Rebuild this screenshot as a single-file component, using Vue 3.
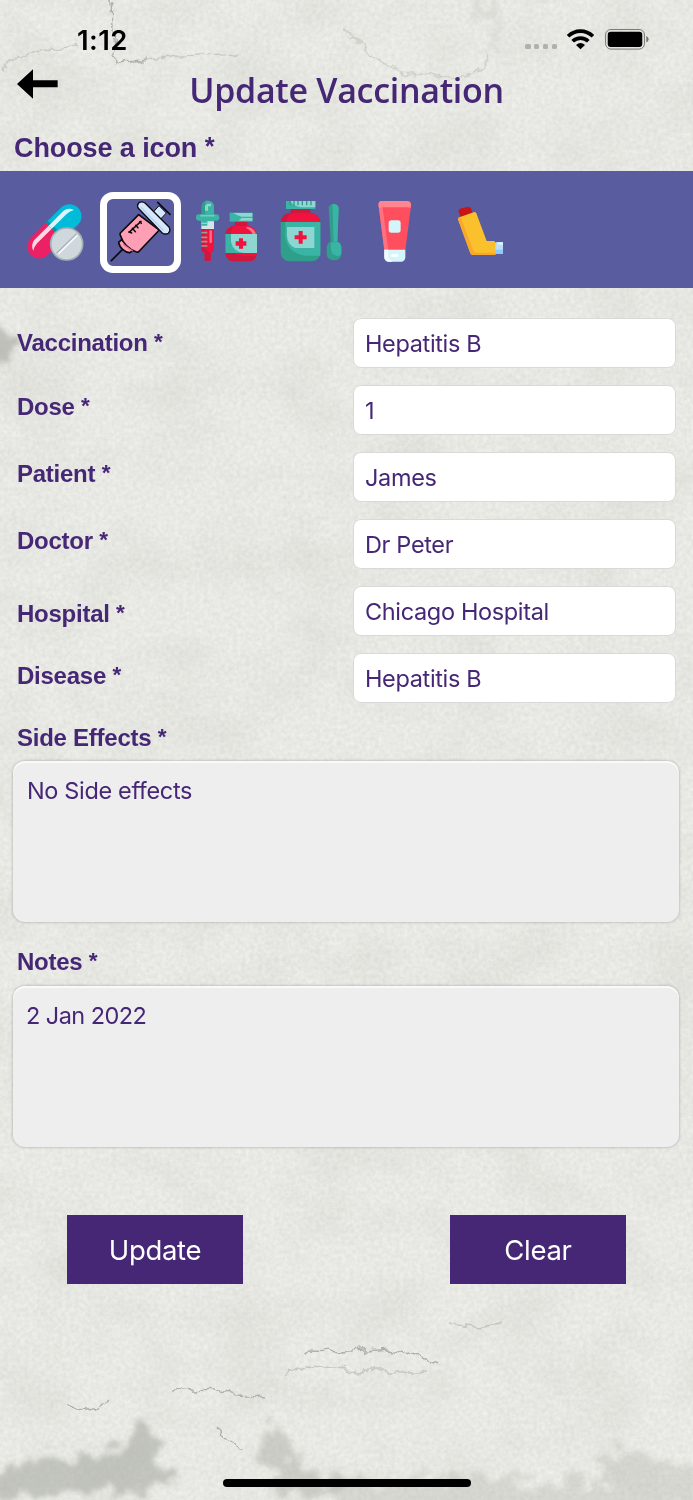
<template>
  <div class="screen">
    <svg
      class="paper"
      viewBox="0 0 693 1500"
      preserveAspectRatio="none"
      color-interpolation-filters="sRGB"
      aria-hidden="true"
    >
      <defs>
        <filter id="grain" x="0" y="0" width="100%" height="100%">
          <feTurbulence type="fractalNoise" baseFrequency="0.24" numOctaves="4" seed="8" />
          <feColorMatrix
            values="0.08 0 0 0 0.872  0.08 0 0 0 0.875  0.08 0 0 0 0.855  0 0 0 0 1"
          />
        </filter>
        <filter id="clouds" x="0" y="0" width="100%" height="100%">
          <feTurbulence type="fractalNoise" baseFrequency="0.014 0.017" numOctaves="5" seed="3" />
          <feColorMatrix values="0 0 0 0 0.62  0 0 0 0 0.63  0 0 0 0 0.59  0.7 0 0 0 -0.28" />
        </filter>
        <filter id="rough" x="-20%" y="-20%" width="140%" height="140%">
          <feTurbulence type="fractalNoise" baseFrequency="0.06" numOctaves="5" seed="5" />
          <feDisplacementMap
            in="SourceGraphic"
            scale="44"
            xChannelSelector="R"
            yChannelSelector="G"
          />
          <feGaussianBlur stdDeviation="2.5" />
        </filter>
        <filter id="crack" x="-20%" y="-20%" width="140%" height="140%">
          <feTurbulence type="fractalNoise" baseFrequency="0.06" numOctaves="4" seed="2" />
          <feDisplacementMap
            in="SourceGraphic"
            scale="14"
            xChannelSelector="R"
            yChannelSelector="G"
          />
          <feGaussianBlur stdDeviation="0.6" />
        </filter>
      </defs>
      <rect width="693" height="1500" filter="url(#grain)" />
      <rect width="693" height="1500" filter="url(#clouds)" opacity="0.35" />
      <!-- stains -->
      <g filter="url(#rough)" fill="#a3a59c">
        <path
          d="M-10 1482 L25 1462 L60 1455 L95 1460 L122 1450 L140 1428 L152 1430 L156 1462 L180 1488 L110 1492 L50 1490 L-10 1500Z"
          opacity="0.55"
        />
        <path d="M262 1435 L274 1418 L284 1435 L306 1472 L350 1478 L340 1492 L272 1496Z" opacity="0.42" />
        <path
          d="M340 1478 L420 1482 L500 1474 L525 1488 L560 1480 L605 1484 L610 1450 L660 1460 L710 1472 L710 1510 L340 1510Z"
          opacity="0.28"
        />
        <ellipse cx="-1" cy="342" rx="11" ry="20" opacity="0.6" />
        <path d="M493 0 L503 30 L500 58 L486 50 L492 28 L470 8Z" opacity="0.18" />
      </g>
      <!-- cracks -->
      <g filter="url(#crack)" fill="none" stroke="#9c9e96" stroke-width="1.4" opacity="0.75">
        <path d="M111 0 L112 30 L115 64 L148 58" />
        <path d="M115 63 L180 57 L240 54" opacity="0.5" />
        <path d="M0 68 L35 54 L78 43" opacity="0.5" />
        <path d="M346 28 Q380 76 438 76 T490 52" opacity="0.4" />
        <path d="M175 1391 L205 1388 L235 1394 L265 1397" />
        <path d="M70 1408 L90 1409 L107 1397" />
        <path d="M305 1351 L350 1352 L390 1349 L440 1364" />
        <path d="M450 1324 L480 1328 L500 1322" opacity="0.6" />
        <path d="M285 1373 L310 1366 L360 1370 L425 1370" opacity="0.6" />
        <path d="M215 1428 L242 1450" />
      </g>
    </svg>

    <div class="content">
      <div class="status-bar">
        <span class="clock">1:12</span>
        <div class="status-icons">
          <span class="cell"><i v-for="n in 4" :key="n"></i></span>
          <svg class="wifi" viewBox="0 0 81 62">
            <path
              d="M3 22 C24 1 57 1 78 22 M17 37 C30 24 51 24 64 37"
              fill="none"
              stroke="#000"
              stroke-width="11"
            />
            <path d="M27 48 Q40.5 37 54 48 L40.5 61Z" />
          </svg>
          <svg class="battery" viewBox="0 0 132 62">
            <rect x="1.5" y="1.5" width="117" height="59" rx="16" fill="none" stroke="#777873" stroke-width="3" />
            <rect x="8" y="8" width="104" height="46" rx="9" />
            <path d="M124 21 Q131 24 131 31 T124 41Z" fill="#777873" />
          </svg>
        </div>
      </div>

      <header class="header">
        <button class="back" aria-label="Back">
          <svg viewBox="0 0 123 90">
            <path d="M0 45 L48 1 V34 H122 V55 H48 V89Z" />
          </svg>
        </button>
        <h1>Update Vaccination</h1>
      </header>

      <h2 class="choose">Choose a icon <span class="required">*</span></h2>

      <div class="icon-strip">
        <button
          v-for="(name, index) in icons"
          :key="name"
          class="icon-item"
          :class="{ selected: index === selectedIcon }"
          :aria-label="name"
          @click="selectedIcon = index"
        >
          <svg v-if="name === 'pills'" viewBox="0 36 243 243">
            <g transform="rotate(45 118 154)">
              <path d="M82 154 V90 A36 36 0 0 1 154 90 V154Z" fill="#00bcd9" />
              <path d="M82 154 V218 A36 36 0 0 0 154 218 V154Z" fill="#eb2065" />
              <path d="M82 145 H154 V154 H82Z" fill="#078fa4" />
              <path d="M94 154 V92 Q96 74 114 67 Q107 80 107 92 V154Z" fill="#d9f5fb" />
              <path d="M94 154 H107 V216 Q108 229 114 240 Q96 232 94 216Z" fill="#fbd6e3" />
            </g>
            <circle cx="155" cy="192" r="48" fill="#cfd8dc" stroke="#a4afb4" stroke-width="5" />
            <path d="M127 222 L187 163" stroke="#a4afb4" stroke-width="10" />
            <path d="M129 223 L188 165" stroke="#f5f8f9" stroke-width="6" />
          </svg>

          <svg v-else-if="name === 'syringe'" viewBox="255 36 243 243">
            <g stroke="#0b0b10" stroke-width="5" stroke-linejoin="round" stroke-linecap="round">
              <path d="M289 242 L325 206" />
              <path d="M320 179 L311 187 Q314 202 324 209 Q335 219 345 218 L354 211Z" fill="#ff9fb6" />
              <path
                d="M371 104 L316 159 Q314 162 316 166 Q322 185 334 197 Q347 210 364 216 Q369 218 373 213 L433 150Z"
                fill="#ff9fb6"
              />
              <path d="M416 95 L432 77 L454 99 L438 116Z" fill="#d6e9fc" stroke-width="3" />
              <path
                d="M371 69 Q381 62 391 70 L462 141 Q468 151 460 160 Q450 165 441 158 L370 85 Q365 76 371 69Z"
                fill="#d6e9fc"
                stroke-width="4"
              />
              <path d="M428 67 L465 103" />
              <path d="M342 157 L378 124 M342 155 L350 159 M352 145 L361 155 M362 136 L369 143 M374 125 L379 130" stroke-width="4.5" />
            </g>
            <path d="M377 81 L446 152" stroke="#b4d0f2" stroke-width="4" />
            <path d="M325 194 L353 213" stroke="#f57391" stroke-width="4" />
          </svg>

          <svg v-else-if="name === 'dropper'" viewBox="-1 36 243 243">
            <path d="M48 104 V80 Q49 62 67 62 T86 80 V104Z" fill="#2f9e8b" />
            <path d="M60 104 V62 H67 Q86 63 86 80 V104Z" fill="#3ab5a5" />
            <path d="M59 92 V80 Q60 72 70 71 H77 V79 H68 V92Z" fill="#8dd6d2" />
            <path d="M48 120 H86 V148 H48Z" fill="#d3e5ea" />
            <path d="M48 120 H86 V124 H66 V137 H48Z" fill="#3ab5a5" />
            <path d="M48 130 H66" stroke="#8dd6d2" stroke-width="4" />
            <rect x="32" y="103" width="70" height="19" rx="9.5" fill="#3ab5a5" />
            <path d="M45 107 H88" stroke="#72ccc5" stroke-width="5" />
            <path d="M48 147 H86 V206 Q85 217 76 219 V242 H58 V219 Q48 214 48 205Z" fill="#f2123e" />
            <path d="M48 147 H58 V195 Q60 211 76 219 V242 H58 V219 Q48 214 48 205Z" fill="#ce183d" />
            <path d="M48 158 H66 M48 172 H66 M48 185 H66 M48 198 H66" stroke="#9b9a92" stroke-width="5" />
            <path d="M76 154 V186" stroke="#ff728b" stroke-width="7" stroke-linecap="round" />
            <rect x="149" y="122" width="37" height="22" fill="#ce183d" />
            <path d="M120 164 Q121 141 147 137 H189 Q214 142 215 166 V219 Q214 243 189 244 H145 Q121 242 120 218Z" fill="#f2123e" />
            <path d="M120 164 Q121 142 147 137 H150 Q137 144 137 164 V190 Q140 229 177 227 H214 Q208 244 189 244 H145 Q121 242 120 218Z" fill="#ce183d" />
            <path d="M186 140 Q209 144 212 164 H202 Q198 151 182 144Z" fill="#ff728b" />
            <path d="M120 162 H215 V219 H120Z" fill="#3ab5a5" />
            <path d="M137 162 H215 V219 H176 Q144 217 137 186Z" fill="#8dd6d2" />
            <path d="M133 98 H202 V125 H133Z" fill="#3ab5a5" />
            <path d="M143 99 H201 V110 H168 L155 105Z M169 114 H201 V122 H160Z" fill="#8dd6d2" />
            <path d="M161 175 H173 V184 H183 V197 H173 V206 H161 V197 H151 V184 H161Z" fill="#f2123e" />
          </svg>

          <svg v-else-if="name === 'medicine'" viewBox="253 36 243 243">
            <rect x="318" y="84" width="59" height="23" fill="#ce183d" />
            <path d="M304 63 H392 V87 H304Z" fill="#3ab5a5" />
            <path d="M318 63 H392 V82 H348 Q322 77 318 63Z" fill="#8dd6d2" />
            <path d="M316 63 V76 M328 63 V79 M340 63 V76 M353 63 V76 M366 63 V76 M379 63 V76" stroke="#2f9e8b" stroke-width="4" />
            <path d="M288 128 Q290 101 317 99 H380 Q405 103 407 128Z" fill="#ce183d" />
            <path d="M304 128 Q307 100 329 99 H380 Q405 103 407 128Z" fill="#f2123e" />
            <path d="M288 126 H407 V220 Q404 244 380 244 H315 Q290 242 288 218Z" fill="#2f9e8b" />
            <path d="M302 126 H407 V227 H364 Q308 221 302 168Z" fill="#3ab5a5" />
            <path d="M307 141 H389 V204 H331 Q307 193 307 166Z" fill="#8dd6d2" />
            <path d="M342 153 H354 V166 H366 V178 H354 V191 H342 V178 H330 V166 H342Z" fill="#f2123e" />
            <path d="M432 82 Q435 72 447 72 T462 84 L458 187 H438Z" fill="#2f9e8b" />
            <path d="M443 72 Q459 70 462 84 L458 187 H447Z" fill="#3ab5a5" />
            <path d="M426 203 Q427 188 438 185 H458 Q468 187 470 202 V224 Q467 240 449 241 Q428 240 426 224Z" fill="#2f9e8b" />
            <path d="M439 187 H458 Q468 187 470 202 V220 Q469 228 458 228 Q439 225 439 206Z" fill="#3ab5a5" />
          </svg>

          <svg v-else-if="name === 'cream'" viewBox="-17 36 243 243">
            <path d="M57 78 Q55 63 66 63 H144 Q155 64 154 77 L137 211 H74Z" fill="#ff4f5f" />
            <path d="M57 78 Q55 63 66 63 L86 211 H74Z" fill="#ff7180" />
            <path d="M57 78 Q55 63 66 63 H144 Q155 64 154 77 L152 84 Q149 82 144 82 H69 Q60 82 58 86Z" fill="#ff858f" />
            <rect x="87" y="121" width="36" height="37" rx="8" fill="#d5f5fc" />
            <path d="M74 209 H137 V232 Q136 244 126 245 H86 Q75 244 74 232Z" fill="#d5f5fc" />
            <path d="M74 209 H86 V230 Q89 240 99 245 H86 Q75 244 74 232Z" fill="#f1fcff" />
            <rect x="94" y="222" width="22" height="9" rx="4.5" fill="#fff" />
          </svg>

          <svg v-else viewBox="237 36 243 243">
            <path d="M295 93 Q297 87 304 85 L325 80 Q331 80 333 85 L338 99 L302 112Z" fill="#c81518" />
            <path d="M405 189 Q407 186 411 186 H429 V221 H405Z" fill="#bbdefa" />
            <path d="M405 209 H429 V221 H405Z" fill="#91c9f8" />
            <path d="M414 187 H429 V194 H414Z" fill="#e3f2fd" />
            <path d="M294 118 Q294 114 298 112 L343 96 Q347 96 349 100 L380 183 H402 Q406 184 406 188 V225 H337 Q333 224 331 220Z" fill="#fac12d" />
            <path d="M294 118 Q294 114 302 111 L338 207 Q342 218 353 218 H406 V225 H337 Q333 224 331 220Z" fill="#faa829" />
          </svg>
        </button>
      </div>

      <form class="form" @submit.prevent>
        <div v-for="field in fields" :key="field.id" class="row">
          <label :for="field.id" :class="field.align">
            {{ field.label }} <span class="required">*</span>
          </label>
          <input :id="field.id" v-model="field.value" type="text" />
        </div>

        <label class="area-label" for="side-effects">
          Side Effects <span class="required">*</span>
        </label>
        <textarea id="side-effects" v-model="sideEffects"></textarea>

        <label class="area-label notes-label" for="notes">
          Notes <span class="required">*</span>
        </label>
        <textarea id="notes" v-model="notes" class="notes"></textarea>

        <div class="actions">
          <button type="submit">Update</button>
          <button type="button" @click="clearForm">Clear</button>
        </div>
      </form>

      <div class="home-indicator"></div>
    </div>
  </div>
</template>

<script setup>
import { ref } from 'vue'

const icons = ['pills', 'syringe', 'dropper', 'medicine', 'cream', 'inhaler']
const selectedIcon = ref(1)

const fields = ref([
  { id: 'vaccination', label: 'Vaccination', value: 'Hepatitis B', align: '' },
  { id: 'dose', label: 'Dose', value: '1', align: 'raised' },
  { id: 'patient', label: 'Patient', value: 'James', align: 'raised' },
  { id: 'doctor', label: 'Doctor', value: 'Dr Peter', align: 'raised' },
  { id: 'hospital', label: 'Hospital', value: 'Chicago Hospital', align: 'lowered' },
  { id: 'disease', label: 'Disease', value: 'Hepatitis B', align: 'raised-sm' },
])

const sideEffects = ref('No Side effects')
const notes = ref('2 Jan 2022')

const clearForm = () => {
  fields.value.forEach((field) => {
    field.value = ''
  })
  sideEffects.value = ''
  notes.value = ''
}
</script>

<style>
body {
  margin: 0;
  background: #e7e8e3;
}
</style>

<style scoped>
.screen {
  position: relative;
  width: 693px;
  height: 1500px;
  overflow: hidden;
  color: #452775;
  font-family: Inter, 'Liberation Sans', sans-serif;
}

.screen * {
  box-sizing: border-box;
}

.paper {
  position: absolute;
  inset: 0;
  width: 100%;
  height: 100%;
}

.content {
  position: relative;
  display: flex;
  flex-direction: column;
  height: 100%;
}

button {
  border: 0;
  padding: 0;
  background: none;
  font-family: inherit;
}

svg {
  display: block;
}

.status-bar {
  display: flex;
  justify-content: space-between;
  height: 64px;
  padding: 23px 44.5px 0 77px;
  color: #000;
}

.clock {
  font-size: 27.5px;
  font-weight: 600;
  line-height: 34px;
  letter-spacing: 0.4px;
}

.status-icons {
  display: flex;
  align-items: flex-start;
  padding-top: 6px;
}

.cell {
  display: flex;
  gap: 3.5px;
  margin: 15px 10px 0 0;
}

.cell i {
  width: 5.3px;
  height: 5.3px;
  border-radius: 1.5px;
  background: #b0b1ad;
}

.wifi {
  width: 27px;
  height: 20.6px;
  margin-right: 10.5px;
}

.battery {
  width: 44px;
  height: 20.6px;
}

.header {
  display: grid;
  grid-template-columns: 60px 1fr 60px;
  height: 62px;
}

.back {
  width: 41px;
  height: 30px;
  margin: 5px 0 0 17px;
}

.back svg {
  width: 41px;
  height: 30px;
}

h1 {
  margin: 4px 0 0;
  font-family: 'Open Sans', sans-serif;
  font-size: 34px;
  font-weight: 650;
  line-height: 44px;
  letter-spacing: -0.3px;
  text-align: center;
  white-space: nowrap;
}

.choose {
  height: 45px;
  margin: 0;
  padding: 5px 14px 0;
  font-family: 'Liberation Sans', sans-serif;
  font-size: 27px;
  line-height: 34px;
  letter-spacing: -0.1px;
}

.required {
  font-size: 0.94em;
  line-height: 0;
  vertical-align: 2px;
}

.icon-strip {
  display: flex;
  align-items: center;
  gap: 3.8px;
  height: 117px;
  padding: 6px 0 0 15px;
  background: #5a5ca0;
}

.icon-item {
  width: 81px;
  height: 81px;
  border-radius: 13px;
}

.icon-item.selected {
  box-shadow: inset 0 0 0 7px #fff;
}

.icon-item svg {
  width: 81px;
  height: 81px;
}

.form {
  display: flex;
  flex-direction: column;
  padding: 30px 13px 0;
}

.row {
  display: grid;
  grid-template-columns: 336px 323px;
  align-items: center;
  height: 50px;
  margin: 0 4px 17px;
}

label {
  font-family: 'Liberation Sans', sans-serif;
  font-size: 24px;
  font-weight: 700;
  line-height: 28px;
  letter-spacing: -0.25px;
}

.raised {
  padding-bottom: 6px;
}

.raised-sm {
  padding-bottom: 4px;
}

.lowered {
  padding-top: 6px;
}

input,
textarea {
  color: #452775;
  font-family: inherit;
  font-size: 23.5px;
  letter-spacing: -0.35px;
  outline: none;
}

input {
  width: 323px;
  height: 50px;
  padding: 0 11px;
  border: 1px solid #d9dad7;
  border-radius: 8px;
  background: #fff;
}

.area-label {
  height: 41px;
  padding: 4px 4px 0;
}

textarea {
  width: 666px;
  height: 161px;
  padding: 15px 14px;
  border: 0;
  border-radius: 12px;
  background: #eee;
  box-shadow:
    0 0 3px #9fa19a,
    inset 0 2px 1px #fafafa;
  line-height: 30px;
  resize: none;
}

.notes-label {
  height: 41px;
  margin-top: 23px;
  padding-top: 3px;
}

.notes {
  padding-left: 13px;
  letter-spacing: -0.55px;
}

.actions {
  display: flex;
  justify-content: space-between;
  padding: 68px 54px 0;
}

.actions button {
  width: 176px;
  height: 69px;
  background: #452775;
  color: #fff;
  font-size: 27.5px;
  letter-spacing: -0.3px;
}

.home-indicator {
  width: 248px;
  height: 8px;
  margin: auto auto 13px;
  border-radius: 4px;
  background: #000;
}
</style>
